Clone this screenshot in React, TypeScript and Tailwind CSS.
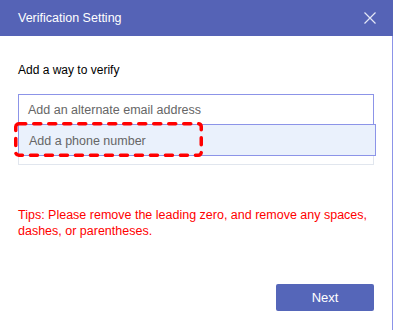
import React from "react";

export default function App() {
  return (
    <div
      className="relative w-[393px] h-[330px] bg-white flex flex-col overflow-hidden"
      style={{ fontFamily: '"Liberation Sans", Arial, sans-serif' }}
    >
      <div className="h-[36px] shrink-0 bg-[#5563b6] flex items-center justify-between pl-[18px] pr-[17px]">
        <span className="text-white text-[12.5px] leading-none">Verification Setting</span>
        <svg width="12" height="12" viewBox="0 0 12 12" className="block">
          <path d="M0.5 0.5 L11.5 11.5 M11.5 0.5 L0.5 11.5" stroke="#e4e7f6" strokeWidth="1.2" />
        </svg>
      </div>
      <div className="flex-1 border-r border-[#8c94e8] pl-[18px] pr-[18px] pt-[27px] flex flex-col">
        <div className="text-[12px] leading-[14px] text-black">Add a way to verify</div>
        <div className="mt-[17px] h-[31px] w-[356px] border border-[#8c94e8] flex items-center pl-[9px] pt-[2px] text-[12.5px] text-[#666666]">
          Add an alternate email address
        </div>
        <div className="w-[356px] border border-t-0 border-[#e1e6ee] pb-[8px]">
          <div className="-mt-px -ml-px h-[32px] w-[358px] border border-[#8c94e8] bg-[#eaf1fc] flex items-center pl-[10px] pt-[2px] text-[12.5px] text-[#666666]">
            Add a phone number
          </div>
        </div>
        <div className="mt-[42px] text-[12.5px] leading-[16px] text-[#ff0000]">
          Tips: Please remove the leading zero, and remove any spaces, dashes, or parentheses.
        </div>
        <div className="mt-[45px] flex justify-end">
          <button className="w-[98px] h-[27px] rounded-[2px] bg-[#5566b9] text-white text-[13px] leading-none">
            Next
          </button>
        </div>
      </div>
      <svg
        className="absolute left-[14px] top-[122px]"
        width="189"
        height="35"
        viewBox="0 0 189 35"
      >
        <rect
          x="1.75"
          y="1.75"
          width="185.5"
          height="31.5"
          rx="3"
          fill="none"
          stroke="#ff0000"
          strokeWidth="3.5"
          strokeDasharray="7 8"
          strokeLinecap="round"
        />
      </svg>
    </div>
  );
}
